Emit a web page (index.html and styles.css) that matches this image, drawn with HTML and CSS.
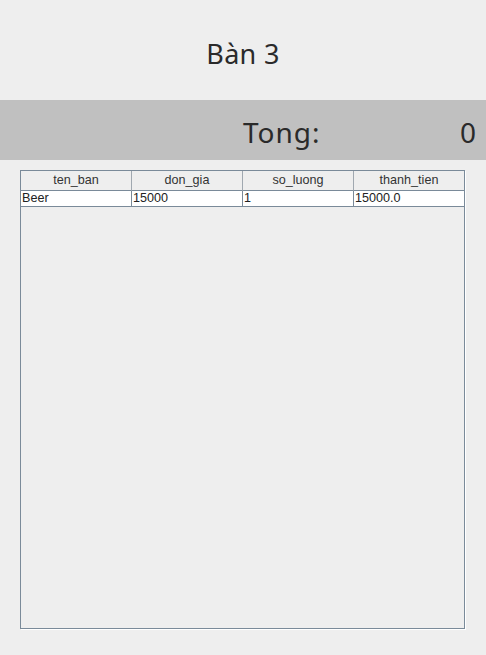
FILE: index.html
```html
<!DOCTYPE html>
<html>
<head>
<meta charset="utf-8">
<link rel="stylesheet" href="styles.css">
</head>
<body>
<div class="title">Bàn 3</div>
<div class="band">
  <div class="band-left"></div>
  <div class="band-right"><span class="label">Tong:</span><span>0</span></div>
</div>
<div class="pane">
  <div class="row head">
    <div class="cell">ten_ban</div>
    <div class="cell">don_gia</div>
    <div class="cell">so_luong</div>
    <div class="cell">thanh_tien</div>
  </div>
  <div class="row data">
    <div class="cell">Beer</div>
    <div class="cell">15000</div>
    <div class="cell">1</div>
    <div class="cell">15000.0</div>
  </div>
</div>
</body>
</html>
```
FILE: styles.css
```css
html, body { margin: 0; padding: 0; }
body {
  background: #eeeeee;
  width: 486px;
  height: 655px;
  font-family: "Noto Sans", "Open Sans", sans-serif;
  color: #2a2a2a;
}
.title {
  height: 100px;
  display: flex;
  align-items: center;
  justify-content: center;
  font-size: 27px;
  padding-top: 6px;
  box-sizing: border-box;
  letter-spacing: 0.3px;
}
.band {
  height: 60px;
  background: #c0c0c0;
  display: grid;
  grid-template-columns: 243px 1fr;
  align-items: center;
  font-size: 28px;
}
.band-right {
  display: flex;
  justify-content: space-between;
  padding-right: 10px;
  padding-top: 4px;
}
.label { letter-spacing: 1px; }
.pane {
  margin: 10px 0 0 20px;
  width: 443px;
  height: 457px;
  border: 1px solid #7a8a99;
  box-shadow: 1px 1px 0 #ffffff;
  font-family: "Liberation Sans", Arial, sans-serif;
  font-size: 12.6px;
  color: #333333;
}
.row {
  display: grid;
  grid-template-columns: 111px 111px 111px 110px;
}
.head .cell {
  height: 19px;
  line-height: 19px;
  text-align: center;
  background: #eeeeee;
  border-right: 1px solid #a0a8b0;
  border-bottom: 1px solid #7a8a99;
}
.head .cell:last-child { border-right: none; }
.data .cell {
  height: 15px;
  line-height: 15px;
  background: #ffffff;
  padding-left: 1px;
  border-right: 1px solid #7a8a99;
  border-bottom: 1px solid #7a8a99;
  color: #222;
}
.data .cell:last-child { border-right: none; }
```
